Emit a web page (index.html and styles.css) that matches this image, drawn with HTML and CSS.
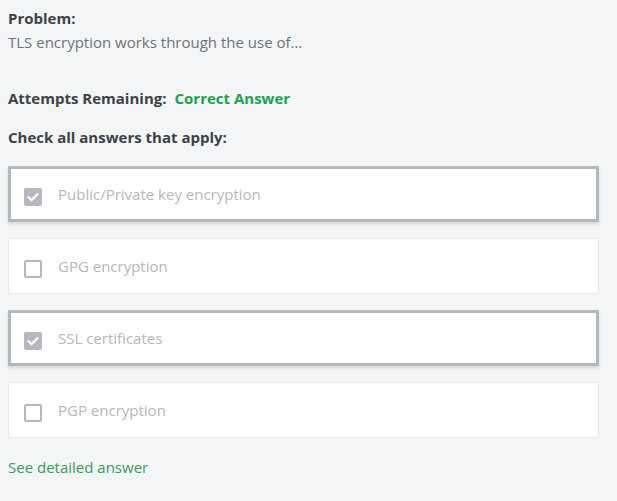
FILE: index.html
```html
<!DOCTYPE html>
<html>
<head>
<meta charset="utf-8">
<link rel="stylesheet" href="styles.css">
</head>
<body>
<div class="quiz">
  <div class="label">Problem:</div>
  <div class="problem">TLS encryption works through the use of…</div>
  <div class="attempts"><span class="label">Attempts Remaining:</span><span class="correct">Correct Answer</span></div>
  <div class="label check-all">Check all answers that apply:</div>
  <div class="options">
    <div class="option selected">
      <span class="box checked"><svg viewBox="0 0 18 18" width="18" height="18"><path d="M4.5 9.2 L7.6 12.2 L13.5 6" fill="none" stroke="#fff" stroke-width="2.2" stroke-linecap="round" stroke-linejoin="round"/></svg></span>
      <span class="text">Public/Private key encryption</span>
    </div>
    <div class="option">
      <span class="box"></span>
      <span class="text">GPG encryption</span>
    </div>
    <div class="option selected">
      <span class="box checked"><svg viewBox="0 0 18 18" width="18" height="18"><path d="M4.5 9.2 L7.6 12.2 L13.5 6" fill="none" stroke="#fff" stroke-width="2.2" stroke-linecap="round" stroke-linejoin="round"/></svg></span>
      <span class="text">SSL certificates</span>
    </div>
    <div class="option">
      <span class="box"></span>
      <span class="text">PGP encryption</span>
    </div>
  </div>
  <a class="detail" href="#">See detailed answer</a>
</div>
</body>
</html>
```

FILE: styles.css
```css
html, body {
  margin: 0;
  padding: 0;
  background: #f4f5f7;
}
body {
  padding: 8px;
  font-family: "Open Sans", "Lato", sans-serif;
  color: #3d4247;
}
.quiz {
  width: 591px;
}
.label {
  font-weight: 700;
  font-size: 15px;
  line-height: 20px;
  color: #3d4247;
}
.problem {
  font-size: 15px;
  line-height: 20px;
  margin-top: 4px;
  color: #6e7378;
}
.attempts {
  display: flex;
  gap: 8px;
  margin-top: 36px;
}
.correct {
  font-weight: 700;
  font-size: 15px;
  line-height: 20px;
  color: #22a052;
}
.check-all {
  margin-top: 19px;
}
.options {
  display: flex;
  flex-direction: column;
  gap: 16px;
  margin-top: 19px;
}
.option {
  display: flex;
  align-items: center;
  height: 56px;
  box-sizing: border-box;
  background: #fff;
  border: 1px solid #e6e8ea;
  padding-left: 15px;
}
.option.selected {
  border: 3px solid #b3b8bc;
  padding-left: 13px;
  box-shadow: 0 2px 3px rgba(0,0,0,0.12);
}
.box {
  width: 18px;
  height: 18px;
  box-sizing: border-box;
  border: 2px solid #b5b9bd;
  border-radius: 2px;
  flex: none;
  display: flex;
  margin-top: 6px;
}
.box.checked {
  background: #b5b9bd;
  border: none;
}
.text {
  margin-left: 16px;
  font-size: 15px;
  color: #b4b8bc;
}
.detail {
  display: block;
  margin-top: 19px;
  font-size: 15px;
  color: #3a9a5e;
  text-decoration: none;
}
```
